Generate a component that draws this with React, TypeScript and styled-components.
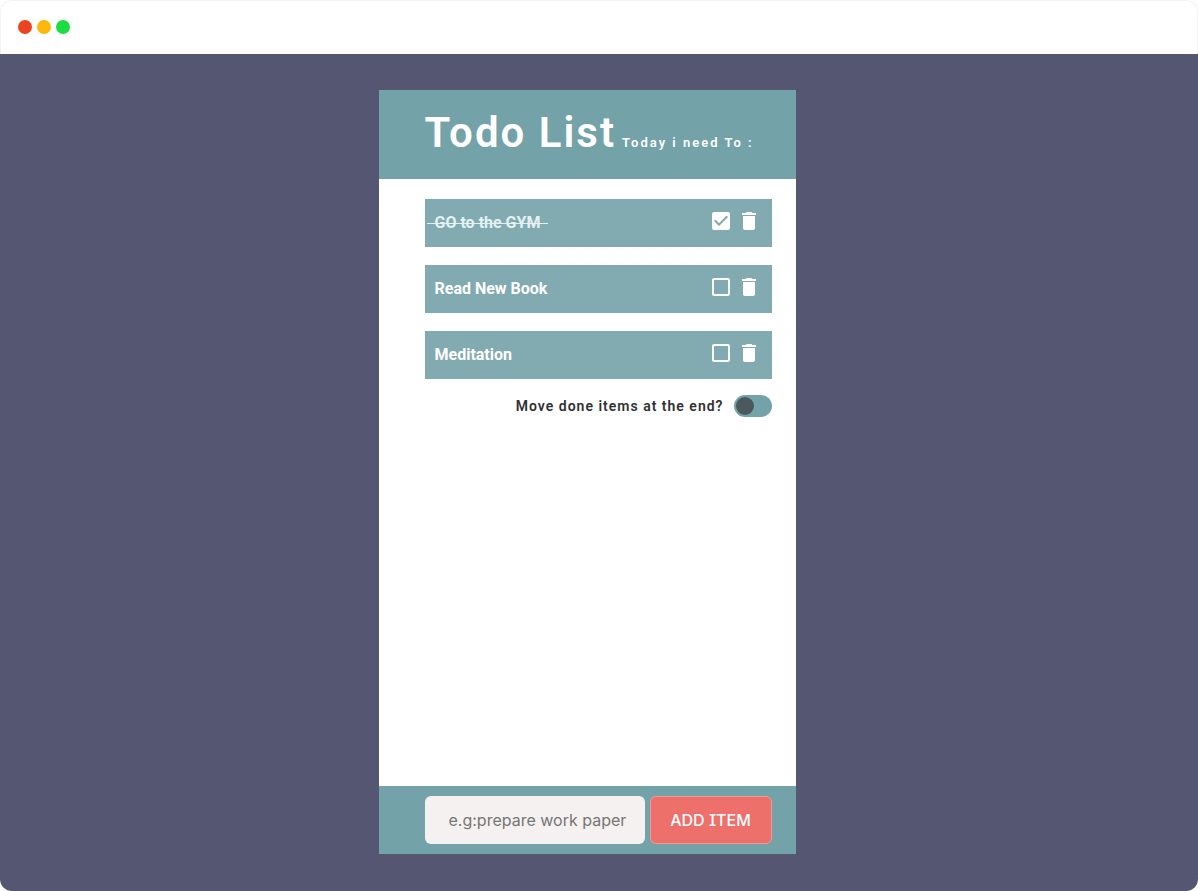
import React, { useState } from "react";
import styled, { createGlobalStyle } from "styled-components";
import { MdCheckBox, MdCheckBoxOutlineBlank, MdDelete } from "react-icons/md";

const GlobalStyle = createGlobalStyle`
  * { box-sizing: border-box; }
  body { margin: 0; background: #fff; font-family: Roboto, "Liberation Sans", sans-serif; }
  button, input { font-family: Inter, "Liberation Sans", sans-serif; }
`;

const Window = styled.div`
  min-height: 100vh;
  display: flex;
  flex-direction: column;
`;

const TitleBar = styled.div`
  height: 54px;
  flex: none;
  display: flex;
  align-items: center;
  gap: 5px;
  padding: 0 17px 1px;
  background: #fff;
  border: 1px solid #f3f3f3;
  border-bottom: 0;
  border-radius: 12px 12px 0 0;
`;

const Dot = styled.span<{ $color: string }>`
  width: 14px;
  height: 14px;
  border-radius: 50%;
  background: ${(p) => p.$color};
`;

const Stage = styled.div`
  flex: 1;
  display: flex;
  justify-content: center;
  padding: 36px 24px 37px 0;
  background: #545672;
  border-radius: 0 0 12px 12px;
`;

const Panel = styled.main`
  width: 100%;
  max-width: 417px;
  display: flex;
  flex-direction: column;
  background: #fff;
`;

const Header = styled.header`
  display: flex;
  align-items: baseline;
  gap: 6px;
  padding: 15px 24px 18px 46px;
  background: #74a2a9;
  color: #fff;
  white-space: nowrap;
`;

const Title = styled.h1`
  margin: 0;
  font-size: 42px;
  line-height: 56px;
  font-weight: 600;
  letter-spacing: 2px;
`;

const Subtitle = styled.p`
  margin: 0;
  font-size: 13px;
  line-height: 20px;
  font-weight: 600;
  letter-spacing: 2px;
`;

const Content = styled.section`
  flex: 1;
  padding: 20px 24px 20px 46px;
`;

const List = styled.ul`
  list-style: none;
  margin: 0;
  padding: 0;
  display: flex;
  flex-direction: column;
  gap: 18px;
`;

const Row = styled.li`
  height: 48px;
  display: flex;
  align-items: center;
  justify-content: space-between;
  padding: 0 11px 0 10px;
  background: #81aab1;
  color: #fff;
`;

const ItemText = styled.span<{ $done: boolean }>`
  position: relative;
  font-size: 16px;
  line-height: 24px;
  font-weight: 700;
  color: ${(p) => (p.$done ? "#e3f1f3" : "#fff")};

  &::after {
    content: "";
    display: ${(p) => (p.$done ? "block" : "none")};
    position: absolute;
    left: -8px;
    right: -8px;
    top: 12px;
    height: 1px;
    background: #e3f1f3;
  }
`;

const Actions = styled.div`
  display: flex;
  gap: 4px;
  padding-bottom: 4px;
`;

const HiddenCheckbox = styled.input`
  position: absolute;
  inset: 0;
  width: 100%;
  height: 100%;
  margin: 0;
  opacity: 0;
  cursor: pointer;
`;

const CheckLabel = styled.label`
  position: relative;
  display: flex;
`;

const IconButton = styled.button`
  display: flex;
  padding: 0;
  border: 0;
  background: none;
  color: #fff;
  cursor: pointer;
`;

const SortOption = styled.label`
  display: flex;
  align-items: center;
  justify-content: flex-end;
  gap: 10px;
  margin-top: 16px;
  font-size: 14px;
  line-height: 20px;
  font-weight: 600;
  letter-spacing: 1px;
  color: #2f3133;
`;

const Switch = styled.input`
  appearance: none;
  display: flex;
  width: 38px;
  height: 22px;
  margin: 0;
  padding: 2px;
  border-radius: 11px;
  background: #74a2a9;
  cursor: pointer;

  &::before {
    content: "";
    width: 18px;
    height: 18px;
    border-radius: 50%;
    background: #4b585c;
  }

  &:checked {
    justify-content: flex-end;
  }
`;

const Footer = styled.form`
  display: flex;
  gap: 5px;
  padding: 10px 24px 10px 46px;
  background: #74a2a9;
`;

const NewItem = styled.input`
  flex: 1;
  min-width: 0;
  height: 48px;
  padding: 0 12px 0 24px;
  border: 0;
  border-radius: 6px;
  background: #f6f1f1;
  font-size: 16px;
  color: #333;

  &::placeholder {
    color: #757575;
    opacity: 1;
  }
`;

const AddButton = styled.button`
  width: 122px;
  height: 48px;
  padding: 0;
  border: 1px solid #f29a98;
  border-radius: 6px;
  background: #ed706b;
  color: #fff;
  font-size: 16px;
  font-weight: 500;
  font-feature-settings: "cv08";
  cursor: pointer;
`;

type Item = { text: string; done: boolean };

const initialItems: Item[] = [
  { text: "GO to the GYM", done: true },
  { text: "Read New Book", done: false },
  { text: "Meditation", done: false },
];

export default function App() {
  const [items, setItems] = useState(initialItems);
  const [draft, setDraft] = useState("");
  const [doneLast, setDoneLast] = useState(false);

  const shown = doneLast
    ? [...items].sort((a, b) => Number(a.done) - Number(b.done))
    : items;

  const toggle = (item: Item) =>
    setItems(items.map((i) => (i === item ? { ...i, done: !i.done } : i)));

  const add = (e: React.FormEvent) => {
    e.preventDefault();
    if (!draft.trim()) return;
    setItems([...items, { text: draft.trim(), done: false }]);
    setDraft("");
  };

  return (
    <>
      <GlobalStyle />
      <Window>
        <TitleBar>
          <Dot $color="#ec4420" />
          <Dot $color="#fdb70e" />
          <Dot $color="#1bdd42" />
        </TitleBar>
        <Stage>
          <Panel>
            <Header>
              <Title>Todo List</Title>
              <Subtitle>Today i need To :</Subtitle>
            </Header>
            <Content>
              <List>
                {shown.map((item) => (
                  <Row key={item.text}>
                    <ItemText $done={item.done}>{item.text}</ItemText>
                    <Actions>
                      <CheckLabel>
                        {item.done ? <MdCheckBox size={24} /> : <MdCheckBoxOutlineBlank size={24} />}
                        <HiddenCheckbox
                          type="checkbox"
                          aria-label={item.text}
                          checked={item.done}
                          onChange={() => toggle(item)}
                        />
                      </CheckLabel>
                      <IconButton
                        type="button"
                        aria-label={`Delete ${item.text}`}
                        onClick={() => setItems(items.filter((i) => i !== item))}
                      >
                        <MdDelete size={24} />
                      </IconButton>
                    </Actions>
                  </Row>
                ))}
              </List>
              <SortOption>
                Move done items at the end?
                <Switch
                  type="checkbox"
                  role="switch"
                  checked={doneLast}
                  onChange={(e) => setDoneLast(e.target.checked)}
                />
              </SortOption>
            </Content>
            <Footer onSubmit={add}>
              <NewItem
                type="text"
                aria-label="New item"
                placeholder="e.g:prepare work paper"
                value={draft}
                onChange={(e) => setDraft(e.target.value)}
              />
              <AddButton type="submit">ADD ITEM</AddButton>
            </Footer>
          </Panel>
        </Stage>
      </Window>
    </>
  );
}
